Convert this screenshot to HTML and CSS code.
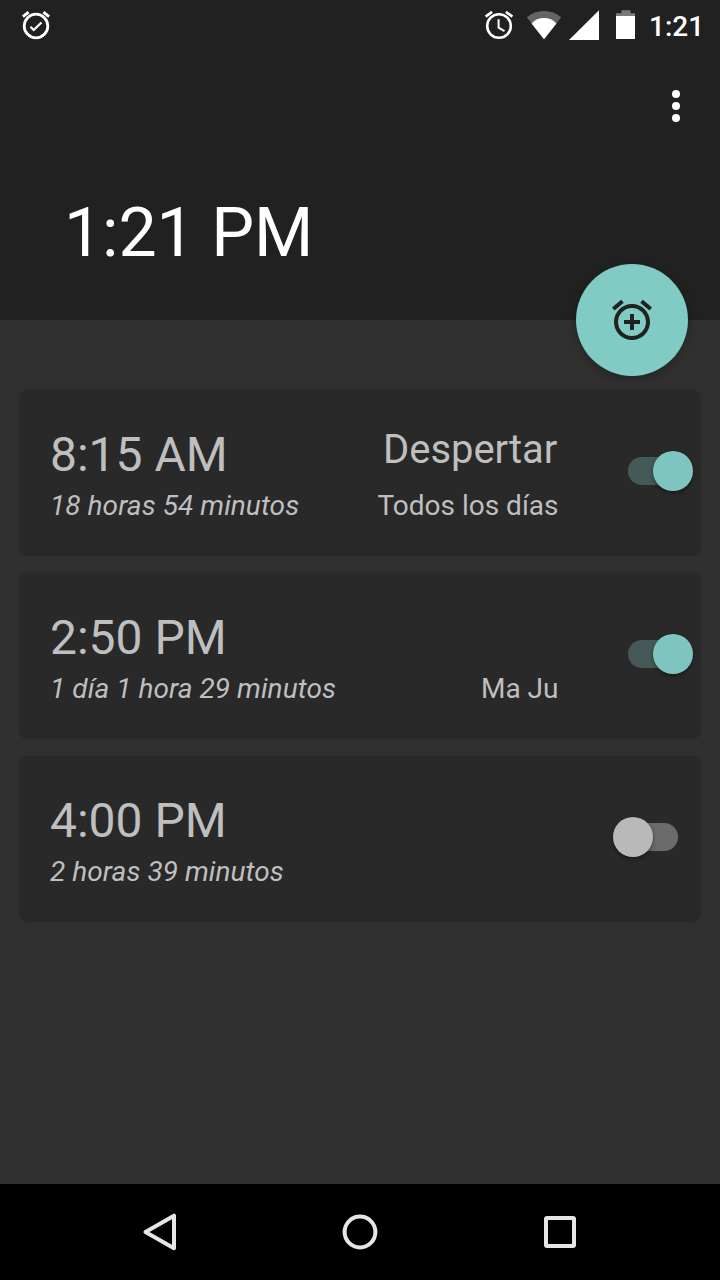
FILE: index.html
```html
<!DOCTYPE html>
<html lang="es">
<head>
<meta charset="utf-8">
<title>Alarmas</title>
<link rel="stylesheet" href="styles.css">
</head>
<body>
<div class="screen">
  <header class="header">
    <div class="status-bar">
      <svg class="status-icon" width="32" height="32" viewBox="0 0 32 32" fill="none" stroke="#fff">
        <circle cx="16" cy="16" r="11.8" stroke-width="2.8"/>
        <path d="M2.9 6.6 8.6 2.1M29.1 6.6 23.4 2.1" stroke-width="3"/>
        <path d="M10.5 16.8 13.7 20 21.5 12.5" stroke-width="2.3"/>
      </svg>
      <div class="status-right">
        <svg class="status-icon" width="32" height="32" viewBox="0 0 32 32" fill="none" stroke="#fff">
          <circle cx="16" cy="16" r="11.8" stroke-width="2.6"/>
          <path d="M2.6 6.6 9.1 1.9M29.4 6.6 22.9 1.9" stroke-width="2.6"/>
          <path d="M15.6 9.2V17.6L21.5 21.2" stroke-width="2"/>
        </svg>
        <svg class="status-icon wifi" width="36" height="32" viewBox="0 0 36 32">
          <path d="M18 29.2.8 7.3Q8.4 1 18 1T35.2 7.3Z" fill="#646464"/>
          <path d="M18 29.2 5.5 13.4Q11 8 18 8T30.5 13.4Z" fill="#fff"/>
        </svg>
        <svg class="status-icon signal" width="30" height="32" viewBox="0 0 30 32">
          <path d="M0 30 30 .2V30Z" fill="#fff"/>
        </svg>
        <svg class="status-icon battery" width="20" height="32" viewBox="0 0 20 32">
          <path d="M5.5 0.3h9v3H19v3.2H0V3.3h5.5Z" fill="#7a7a7a"/>
          <path d="M0 6h19v23H0Z" fill="#fff"/>
        </svg>
        <span class="status-time">1:21</span>
      </div>
    </div>
    <div class="toolbar">
      <svg width="8" height="32" viewBox="0 0 8 32" fill="#fff">
        <circle cx="4" cy="4" r="4"/><circle cx="4" cy="16" r="4"/><circle cx="4" cy="28" r="4"/>
      </svg>
    </div>
    <h1 class="clock">1:21 PM</h1>
    <button class="fab" aria-label="Añadir alarma">
      <svg width="48" height="48" viewBox="0 0 24 24" fill="#212121">
        <path d="M7.88 3.39 6.6 1.86 2 5.71l1.29 1.53 4.59-3.85zM22 5.72l-4.6-3.86-1.29 1.53 4.6 3.86L22 5.72zM12 4c-4.97 0-9 4.03-9 9s4.02 9 9 9c4.97 0 9-4.03 9-9s-4.03-9-9-9zm0 16c-3.87 0-7-3.13-7-7s3.13-7 7-7 7 3.13 7 7-3.13 7-7 7zm1-11h-2v3H8v2h3v3h2v-3h3v-2h-3V9z"/>
      </svg>
    </button>
  </header>

  <main class="alarms">
    <section class="card">
      <div class="when">
        <div class="time">8:15 AM</div>
        <div class="remaining">18 horas 54 minutos</div>
      </div>
      <div class="info">
        <div class="label">Despertar</div>
        <div class="days">Todos los días</div>
      </div>
      <div class="switch on"><span class="thumb"></span></div>
    </section>
    <section class="card">
      <div class="when">
        <div class="time">2:50 PM</div>
        <div class="remaining">1 día 1 hora 29 minutos</div>
      </div>
      <div class="info">
        <div class="days">Ma Ju</div>
      </div>
      <div class="switch on"><span class="thumb"></span></div>
    </section>
    <section class="card">
      <div class="when">
        <div class="time">4:00 PM</div>
        <div class="remaining">2 horas 39 minutos</div>
      </div>
      <div class="info"></div>
      <div class="switch"><span class="thumb"></span></div>
    </section>
  </main>

  <nav class="nav-bar">
    <svg width="40" height="40" viewBox="0 0 40 40"><path d="M5.5 20 34 3.7V36.3Z"/></svg>
    <svg width="40" height="40" viewBox="0 0 40 40"><circle cx="20" cy="20" r="15.4"/></svg>
    <svg width="40" height="40" viewBox="0 0 40 40"><rect x="6" y="6" width="28" height="28" rx="1"/></svg>
  </nav>
</div>
</body>
</html>
```

FILE: styles.css
```css
* {
  box-sizing: border-box;
}

body {
  margin: 0;
  background: #303030;
  font-family: Roboto, sans-serif;
}

.screen {
  display: flex;
  flex-direction: column;
  width: 720px;
  height: 1280px;
  overflow: hidden;
}

.header {
  position: relative;
  height: 320px;
  background: #212121;
  color: #fff;
}

.status-bar {
  display: flex;
  justify-content: space-between;
  height: 50px;
  padding: 10px 18px 0 20px;
}

.status-right {
  display: flex;
}

.status-icon {
  display: block;
}

.wifi {
  margin-left: 11px;
}

.signal {
  margin-left: 7px;
}

.battery {
  margin-left: 17px;
}

.status-time {
  width: 53px;
  margin-left: 13px;
  font-size: 28px;
  font-weight: 500;
  line-height: 33px;
  white-space: nowrap;
}

.toolbar {
  display: flex;
  justify-content: flex-end;
  height: 143px;
  padding: 40px 40px 0 0;
}

.clock {
  margin: 0;
  padding-left: 64px;
  font-size: 68px;
  font-weight: 400;
  letter-spacing: -0.15px;
  line-height: 80px;
}

/* Floating button straddling the header's lower edge */
.fab {
  position: absolute;
  right: 32px;
  bottom: -56px;
  display: flex;
  align-items: center;
  justify-content: center;
  width: 112px;
  height: 112px;
  padding: 0;
  border: 0;
  border-radius: 50%;
  background: #80cbc4;
  box-shadow: 0 3px 9px rgba(0, 0, 0, 0.25);
}

.alarms {
  display: flex;
  flex: 1;
  flex-direction: column;
  gap: 19px;
  padding: 70px 20px 0;
}

.card {
  display: flex;
  height: 164px;
  padding: 37px 7px 32px 30px;
  border-radius: 8px;
  background: #292929;
  box-shadow: 0 1px 3px rgba(0, 0, 0, 0.3);
  color: #bfbfbf;
  white-space: nowrap;
}

.time {
  margin-bottom: 6px;
  font-size: 48px;
  line-height: 56px;
}

.remaining,
.days {
  font-size: 28px;
  line-height: 33px;
}

.remaining {
  font-style: italic;
  letter-spacing: 0.06px;
}

.info {
  display: flex;
  flex: 1;
  flex-direction: column;
  justify-content: flex-end;
  margin-right: 54.5px;
  text-align: right;
}

.label {
  margin-bottom: 16px;
  padding-right: 1.2px;
  font-size: 40px;
  letter-spacing: -0.05px;
  line-height: 46px;
}

.switch {
  position: relative;
  display: flex;
  align-items: center;
  width: 80px;
  height: 40px;
  margin-top: 24px;
  padding: 0 15px;
}

.switch::before {
  content: "";
  width: 50px;
  height: 28px;
  border-radius: 14px;
  background: #6b6b6b;
}

.thumb {
  position: absolute;
  top: 0;
  left: 0;
  width: 40px;
  height: 40px;
  border-radius: 50%;
  background: #b9b9b9;
  box-shadow: 0 2px 4px rgba(0, 0, 0, 0.4);
}

.switch.on::before {
  background: #455a58;
}

.switch.on .thumb {
  left: 40px;
  background: #7ec5bf;
}

.nav-bar {
  display: flex;
  justify-content: center;
  gap: 160px;
  height: 96px;
  padding-top: 28px;
  background: #000;
  fill: none;
  stroke: #e6e6e6;
  stroke-width: 4;
  stroke-linejoin: round;
}
```
